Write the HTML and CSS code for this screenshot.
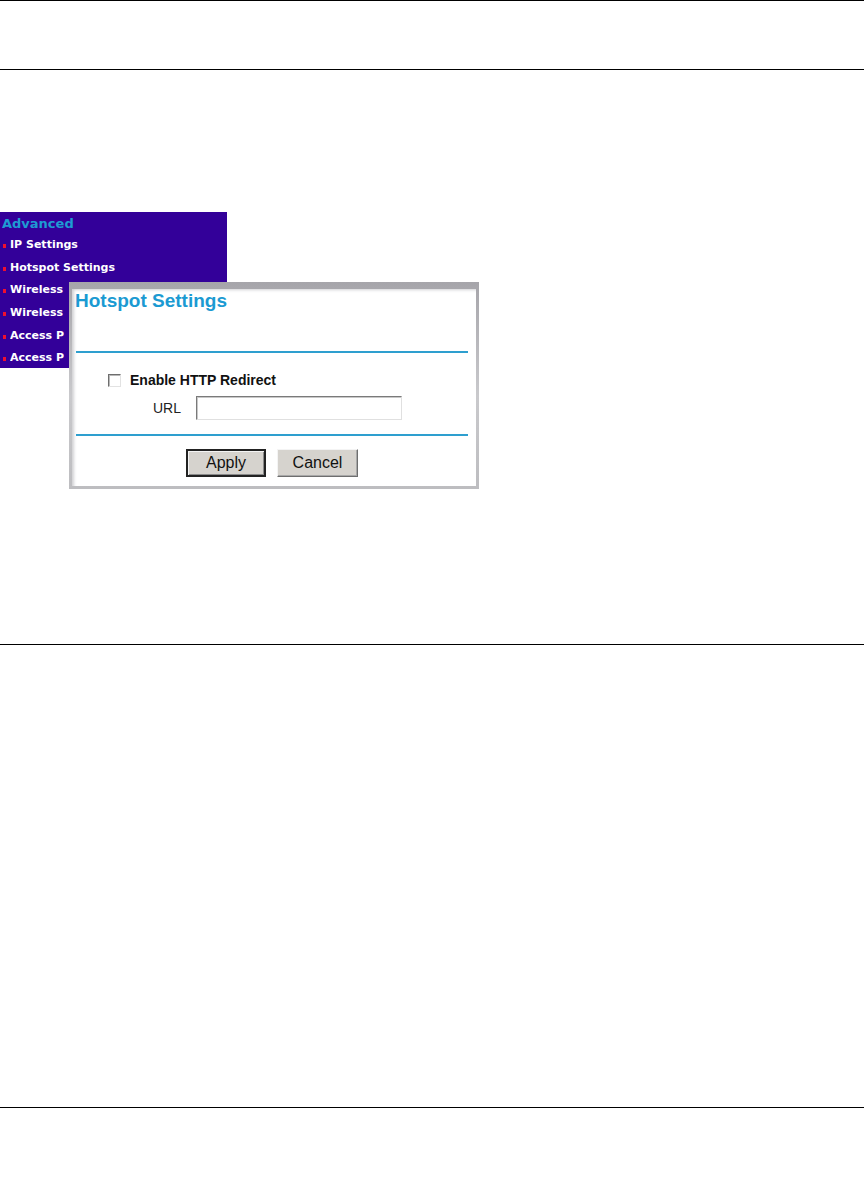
FILE: index.html
```html
<!DOCTYPE html>
<html>
<head>
<meta charset="utf-8">
<link rel="stylesheet" href="styles.css">
</head>
<body>
<div class="page">
  <div class="rule"></div>
  <div class="header"></div>
  <div class="rule"></div>
  <div class="section">
    <div class="figure">
      <div class="sidebar">
        <div class="side-title">Advanced</div>
        <ul class="side-list">
          <li><span class="bullet"></span>IP Settings</li>
          <li><span class="bullet"></span>Hotspot Settings</li>
          <li class="hidden-part"><span class="bullet"></span><span class="clip">Wireless</span></li>
          <li class="hidden-part"><span class="bullet"></span><span class="clip">Wireless</span></li>
          <li class="hidden-part"><span class="bullet"></span><span class="clip">Access P</span></li>
          <li class="hidden-part"><span class="bullet"></span><span class="clip">Access P</span></li>
        </ul>
      </div>
      <div class="window">
        <div class="win-inner">
          <div class="win-title">Hotspot Settings</div>
          <div class="blue-rule first"></div>
          <div class="check-row">
            <span class="checkbox"></span>
            <span class="check-label">Enable HTTP Redirect</span>
          </div>
          <div class="url-row">
            <span class="url-label">URL</span>
            <span class="text-input"></span>
          </div>
          <div class="blue-rule second"></div>
          <div class="buttons">
            <span class="btn btn-default">Apply</span>
            <span class="btn">Cancel</span>
          </div>
        </div>
      </div>
    </div>
  </div>
  <div class="rule"></div>
  <div class="body-space"></div>
  <div class="rule"></div>
</div>
</body>
</html>
```
FILE: styles.css
```css
html, body {
  margin: 0;
  padding: 0;
  background: #ffffff;
}
.page {
  width: 864px;
  display: flex;
  flex-direction: column;
  font-family: "Liberation Sans", Arial, sans-serif;
}
.rule {
  height: 1px;
  background: #000;
}
.header {
  height: 68px;
}
.section {
  height: 574px;
  padding-top: 142px;
  box-sizing: border-box;
}
.figure {
  position: relative;
  width: 480px;
  height: 277px;
}
.sidebar {
  width: 227px;
  height: 156px;
  overflow: hidden;
  background: #330099;
  box-sizing: border-box;
  padding-top: 4px;
  font-family: "DejaVu Sans", Verdana, sans-serif;
  font-weight: bold;
}
.side-title {
  font-size: 13px;
  line-height: 16px;
  color: #1e9bd3;
  padding-left: 2px;
  height: 16px;
}
.side-list {
  list-style: none;
  margin: 2px 0 0 0;
  padding: 0;
}
.side-list li {
  font-size: 11px;
  line-height: 22.67px;
  color: #ffffff;
  white-space: nowrap;
  display: flex;
  align-items: center;
  padding-left: 3px;
}
.clip {
  display: block;
  width: 59px;
  overflow: hidden;
}
.bullet {
  width: 3px;
  height: 4px;
  background: #f0102e;
  margin-right: 4px;
  margin-top: 1px;
  flex: none;
}
.window {
  position: absolute;
  left: 69px;
  top: 70px;
  width: 410px;
  height: 207px;
  box-sizing: border-box;
  padding: 7px 3px 3px 3px;
  background: linear-gradient(#a6a5aa, #c9c9cc 55%, #bdbdc0);
}
.win-inner {
  background: #fff;
  height: 100%;
  box-sizing: border-box;
  padding: 1px 8px 0 4px;
  box-shadow: inset 3px 2px 3px -1px rgba(120,120,130,0.35);
  display: flex;
  flex-direction: column;
}
.win-title {
  font-size: 19px;
  font-weight: bold;
  line-height: 22px;
  color: #1b9ad2;
  margin-left: -1px;
}
.blue-rule {
  height: 2px;
  background: #2e9fcf;
}
.blue-rule.first {
  margin-top: 39px;
}
.check-row {
  margin-top: 19px;
  display: flex;
  align-items: center;
  height: 16px;
  padding-left: 32px;
}
.checkbox {
  width: 13px;
  height: 13px;
  box-sizing: border-box;
  border: 1px solid;
  border-color: #6e6e6e #e2e2e2 #e2e2e2 #6e6e6e;
  background: #fff;
  box-shadow: inset 1px 1px 0 #b8b8b8;
}
.check-label {
  margin-left: 9px;
  font-size: 14px;
  font-weight: bold;
  color: #111;
  line-height: 16px;
}
.url-row {
  margin-top: 8px;
  display: flex;
  align-items: center;
  height: 24px;
  padding-left: 77px;
}
.url-label {
  font-size: 14px;
  color: #222;
  width: 43px;
}
.text-input {
  width: 206px;
  height: 24px;
  box-sizing: border-box;
  border: 1px solid;
  border-color: #7a7a7a #e0e0e0 #e0e0e0 #7a7a7a;
  box-shadow: inset 1px 1px 0 #c8c8c8;
  background: #fff;
}
.blue-rule.second {
  margin-top: 14px;
}
.buttons {
  margin-top: 13px;
  display: flex;
  justify-content: center;
  gap: 11px;
}
.btn {
  width: 81px;
  height: 28px;
  box-sizing: border-box;
  display: flex;
  align-items: center;
  justify-content: center;
  font-size: 16px;
  color: #111;
  background: #d6d3ce;
  border: 1px solid;
  border-color: #f4f4f4 #6e6e6e #6e6e6e #f4f4f4;
  box-shadow: inset -1px -1px 0 #a8a8a8;
}
.btn-default {
  width: 80px;
  border: 2px solid #222;
  box-shadow: inset 1px 1px 0 #f4f4f4, inset -1px -1px 0 #8a8a8a;
}
.body-space {
  height: 462px;
}
```
